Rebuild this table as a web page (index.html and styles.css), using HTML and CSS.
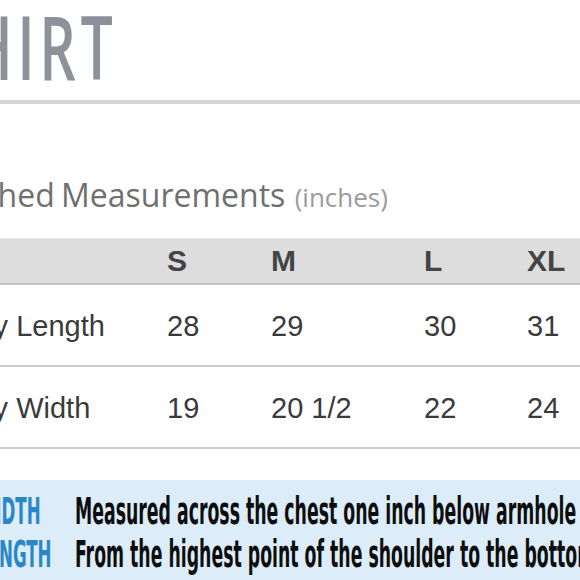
FILE: index.html
```html
<!DOCTYPE html>
<html>
<head>
<meta charset="utf-8">
<link rel="stylesheet" href="styles.css">
</head>
<body>
<div class="sheet">
  <h1 class="title"><span class="title-text">T-SHIRT</span></h1>
  <div class="rule"></div>
  <h2 class="heading">Finished Measurements <span class="unit">(inches)</span></h2>
  <div class="table">
    <div class="row head">
      <div class="cell label"></div>
      <div class="cell">S</div>
      <div class="cell">M</div>
      <div class="cell">L</div>
      <div class="cell">XL</div>
    </div>
    <div class="row">
      <div class="cell label">Body Length</div>
      <div class="cell">28</div>
      <div class="cell">29</div>
      <div class="cell">30</div>
      <div class="cell">31</div>
    </div>
    <div class="row">
      <div class="cell label">Body Width</div>
      <div class="cell">19</div>
      <div class="cell">20 1/2</div>
      <div class="cell">22</div>
      <div class="cell">24</div>
    </div>
  </div>
  <div class="guide">
    <div class="line">
      <div class="key"><span class="squeeze">WIDTH</span></div>
      <div class="desc"><span class="squeeze">Measured across the chest one inch below armhole</span></div>
    </div>
    <div class="line">
      <div class="key"><span class="squeeze">LENGTH</span></div>
      <div class="desc"><span class="squeeze">From the highest point of the shoulder to the bottom hem</span></div>
    </div>
  </div>
</div>
</body>
</html>
```

FILE: styles.css
```css
html, body {
  margin: 0;
  padding: 0;
  background: #ffffff;
  overflow: hidden;
}

.sheet {
  margin-left: -200px;
  width: 1000px;
}

.title {
  margin: 2px 0 0 74px;
  font-family: "Open Sans", sans-serif;
  font-weight: 600;
  font-size: 88px;
  line-height: 88px;
  color: #8d929a;
  white-space: nowrap;
}

.title-text {
  display: inline-block;
  letter-spacing: 7px;
  transform: scaleX(0.65);
  transform-origin: left center;
}

.rule {
  margin-top: 10px;
  height: 4px;
  background: #d6d6d6;
}

.heading {
  margin: 71px 0 0 130px;
  font-family: "Open Sans", sans-serif;
  font-weight: 400;
  font-size: 32px;
  line-height: 40px;
  word-spacing: -2px;
  color: #707070;
  white-space: nowrap;
}

.unit {
  margin-left: 3px;
  font-size: 26px;
  color: #9b9b9b;
}

.table {
  margin: 21px 0 0 130px;
  width: 860px;
  font-family: "Liberation Sans", Arial, sans-serif;
}

.row {
  display: grid;
  grid-template-columns: 237px 104px 153px 103px 1fr;
  align-items: center;
  border-bottom: 2px solid #cdcdcd;
  font-size: 29px;
  color: #3a3a3a;
  padding-top: 3px;
  box-sizing: border-box;
  height: 82px;
}

.row.head {
  height: 47px;
  padding-top: 0;
  background: #dddddd;
  border-top: 1px solid #e6e6e6;
  border-bottom: 2px solid #c2c2c2;
  font-weight: 700;
  font-size: 30px;
  color: #444444;
}

.cell {
  white-space: nowrap;
}

.cell.label {
  padding-left: 12px;
}

.guide {
  margin-top: 31px;
  height: 110px;
  background: #dcedf9;
  padding-top: 10px;
  box-sizing: border-box;
  font-family: "DejaVu Sans Condensed", "DejaVu Sans", sans-serif;
  font-weight: 700;
  font-size: 37px;
}

.line {
  display: grid;
  grid-template-columns: 275px 1fr;
  height: 43px;
  line-height: 43px;
  white-space: nowrap;
}

.key {
  padding-left: 177px;
  color: #2a86c6;
}

.desc {
  color: #0d0d0d;
}

.squeeze {
  display: inline-block;
  transform: scaleX(0.5);
  transform-origin: left center;
}

.desc .squeeze {
  transform: scaleX(0.52);
}
```
